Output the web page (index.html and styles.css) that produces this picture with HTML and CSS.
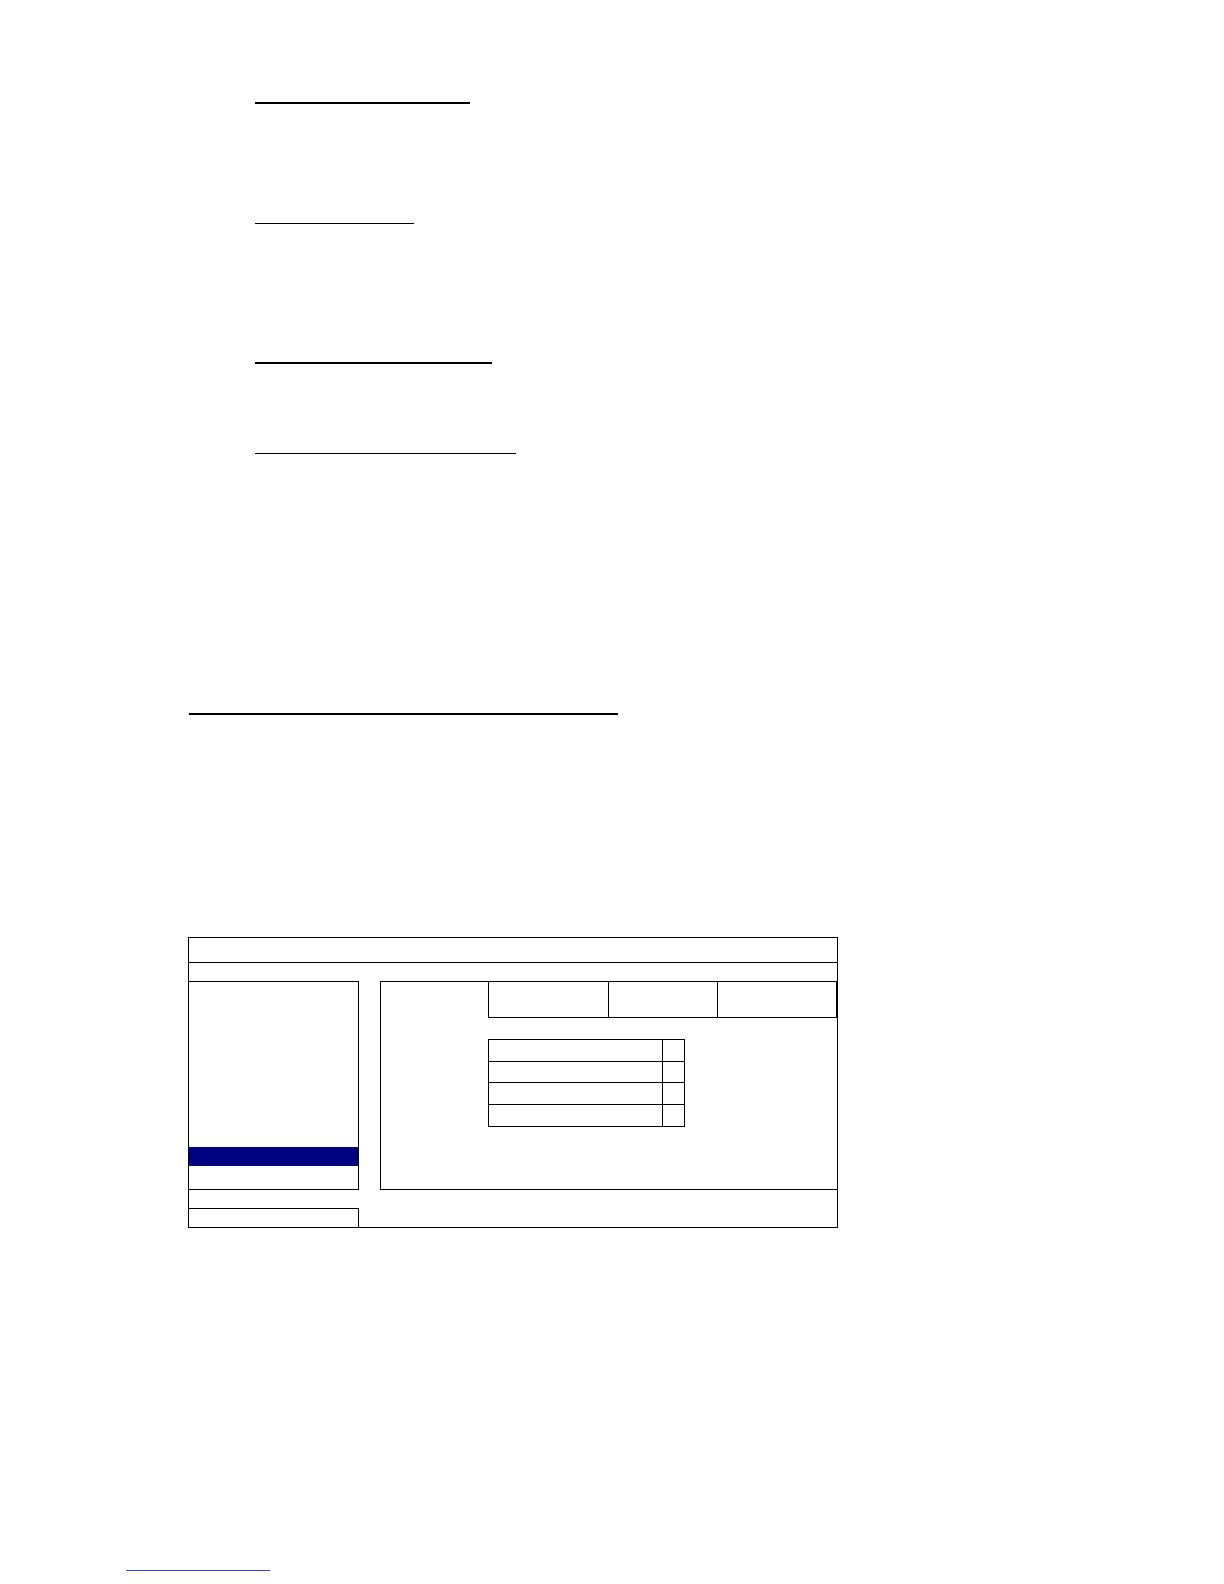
FILE: index.html
```html
<!DOCTYPE html>
<html lang="en">
<head>
<meta charset="utf-8">
<title>Document page</title>
<link rel="stylesheet" href="styles.css">
</head>
<body>
<div class="doc">
  <div class="rule r1"></div>
  <div class="rule r2"></div>
  <div class="rule r3"></div>
  <div class="rule r4"></div>
  <div class="rule r5"></div>

  <div class="osd">
    <div class="osd-title"></div>
    <div class="osd-bar"></div>
    <div class="osd-panels">
      <div class="menu">
        <div class="menu-sel"></div>
      </div>
      <div class="content">
        <div class="tabrow">
          <div class="tabspace"></div>
          <div class="tabs">
            <div class="tab t1"></div>
            <div class="tab t2"></div>
            <div class="tab t3"></div>
          </div>
        </div>
        <div class="tbl">
          <div class="trow h21"><div class="c1"></div><div class="c2"></div></div>
          <div class="trow h20"><div class="c1"></div><div class="c2"></div></div>
          <div class="trow h21"><div class="c1"></div><div class="c2"></div></div>
          <div class="trow h21"><div class="c1"></div><div class="c2"></div></div>
        </div>
      </div>
    </div>
    <div class="osd-gap"></div>
    <div class="osd-foot">
      <div class="foot-box"></div>
    </div>
  </div>

  <div class="link-line"></div>
</div>
</body>
</html>
```
FILE: styles.css
```css
html, body {
  margin: 0;
  padding: 0;
  background: #ffffff;
  font-family: "Liberation Serif", "Times New Roman", serif;
}

.doc {
  display: flow-root;
  width: 1224px;
  height: 1584px;
}

.rule {
  height: 0;
  border-top: 1px solid #000;
}
.r1 { margin: 102px 0 0 255px; width: 215px; border-top-width: 2px; }
.r2 { margin: 119px 0 0 255px; width: 159px; }
.r3 { margin: 138px 0 0 255px; width: 237px; border-top-width: 2px; }
.r4 { margin: 89px 0 0 255px; width: 261px; }
.r5 { margin: 259px 0 0 189px; width: 429px; border-top-width: 2px; }

/* OSD diagram */
.osd {
  box-sizing: border-box;
  margin: 222px 0 0 188px;
  width: 650px;
  border: 1px solid #000;
}
.osd-title {
  height: 24px;
  border-bottom: 1px solid #000;
}
.osd-bar {
  height: 18px;
}
.osd-panels {
  display: flex;
  height: 209px;
}
.menu {
  box-sizing: border-box;
  width: 170px;
  height: 209px;
  border-top: 1px solid #000;
  border-right: 1px solid #000;
  border-bottom: 1px solid #000;
  display: flow-root;
}
.menu-sel {
  margin-top: 165px;
  height: 19px;
  background: #000080;
}
.content {
  box-sizing: border-box;
  margin-left: 21px;
  flex: 1;
  height: 209px;
  border-top: 1px solid #000;
  border-left: 1px solid #000;
  border-bottom: 1px solid #000;
  display: flow-root;
}
.tabrow {
  display: flex;
}
.tabspace {
  width: 107px;
}
.tabs {
  display: flex;
  border-left: 1px solid #000;
  border-bottom: 1px solid #000;
}
.tab {
  height: 35px;
  border-right: 1px solid #000;
}
.t1 { width: 119px; }
.t2 { width: 108px; }
.t3 { width: 118px; }

.tbl {
  margin: 21px 0 0 107px;
  width: 196px;
  border-left: 1px solid #000;
  border-top: 1px solid #000;
}
.trow {
  display: flex;
}
.trow > div {
  border-right: 1px solid #000;
  border-bottom: 1px solid #000;
}
.h21 > div { height: 21px; }
.h20 > div { height: 20px; }
.c1 { width: 173px; }
.c2 { width: 21px; }

.osd-gap {
  height: 18px;
}
.osd-foot {
  height: 19px;
}
.foot-box {
  box-sizing: border-box;
  width: 170px;
  height: 19px;
  border-top: 1px solid #000;
  border-right: 1px solid #000;
}

.link-line {
  margin: 342px 0 0 126px;
  width: 144px;
  height: 0;
  border-top: 1px solid #2a48d0;
}
```
